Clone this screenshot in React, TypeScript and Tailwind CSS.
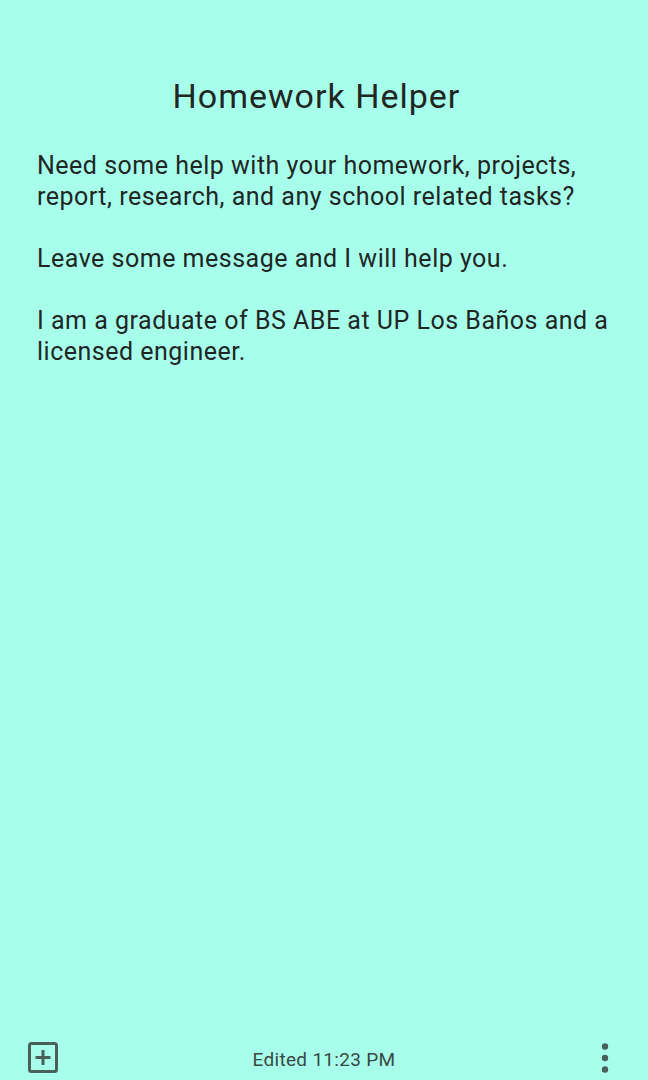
export default function App() {
  return (
    <div
      className="w-[648px] h-[1080px] bg-[#a7ffeb] flex flex-col text-[#1f2624]"
      style={{ fontFamily: 'Roboto, "Noto Sans", sans-serif' }}
    >
      <div className="flex-1 pt-[74px] px-[37px]">
        <h1 className="text-center text-[34px] leading-[44px] font-normal tracking-[1px] pr-[15px]">
          Homework Helper
        </h1>
        <div className="mt-[32px] text-[25px] leading-[31px] tracking-[0.5px]">
          <p>
            Need some help with your homework, projects,
            <br />
            report, research, and any school related tasks?
          </p>
          <p className="mt-[31px]">Leave some message and I will help you.</p>
          <p className="mt-[31px]">
            I am a graduate of BS ABE at UP Los Baños and a
            <br />
            licensed engineer.
          </p>
        </div>
      </div>
      <div className="h-[44px] grid grid-cols-[1fr_auto_1fr] items-center pl-[27px] pr-[35px] pb-[1px]">
        <svg width="32" height="32" viewBox="0 0 32 32" className="text-[#4a5f5a]">
          <rect x="2.5" y="1.5" width="27" height="28" rx="2" fill="none" stroke="currentColor" strokeWidth="3" />
          <path d="M16 8v15M8.5 15.5h15" stroke="currentColor" strokeWidth="3" />
        </svg>
        <span className="text-[19px] tracking-[0.3px] text-[#3a4744] pt-[5px] ml-[8px]">Edited 11:23 PM</span>
        <svg width="16" height="32" viewBox="0 0 16 32" className="text-[#4a5f5a] justify-self-end">
          <circle cx="8" cy="4.5" r="3.2" fill="currentColor" />
          <circle cx="8" cy="16" r="3.2" fill="currentColor" />
          <circle cx="8" cy="27.5" r="3.2" fill="currentColor" />
        </svg>
      </div>
    </div>
  );
}
